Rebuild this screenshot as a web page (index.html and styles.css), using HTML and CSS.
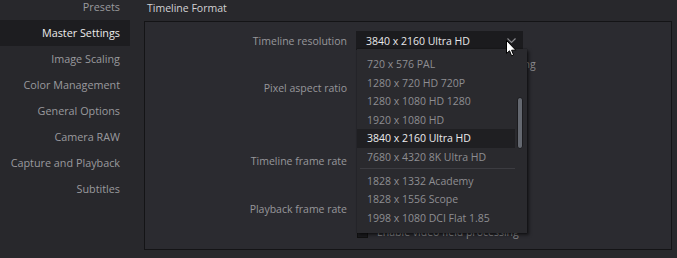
FILE: index.html
```html
<!DOCTYPE html>
<html>
<head>
<meta charset="utf-8">
<link rel="stylesheet" href="styles.css">
</head>
<body>
<div class="app">
  <nav class="sidebar">
    <div class="nav-item">Presets</div>
    <div class="nav-item active">Master Settings</div>
    <div class="nav-item">Image Scaling</div>
    <div class="nav-item">Color Management</div>
    <div class="nav-item">General Options</div>
    <div class="nav-item">Camera RAW</div>
    <div class="nav-item">Capture and Playback</div>
    <div class="nav-item">Subtitles</div>
  </nav>
  <main class="main">
    <div class="section-title">Timeline Format</div>
    <section class="panel">
      <div class="form">
        <div class="label row-res">Timeline resolution</div>
        <div class="control row-res">
          <div class="select">
            <span class="select-value">3840 x 2160 Ultra HD</span>
            <svg class="chevron" width="9" height="6" viewBox="0 0 9 6"><path d="M0.5 0.5 L4.5 4.5 L8.5 0.5" fill="none" stroke="#8a8a8e" stroke-width="1.2"/></svg>
            <svg class="cursor" width="11" height="17" viewBox="0 0 11 17"><path d="M0.5 0.5 L0.5 13.5 L3.5 10.8 L5.6 15.8 L7.6 15 L5.6 10.2 L9.8 10.2 Z" fill="#ffffff" stroke="#000000" stroke-width="1" stroke-linejoin="round"/></svg>
            <div class="menu">
              <div class="menu-list">
                <div class="opt">720 x 576 PAL</div>
                <div class="opt">1280 x 720 HD 720P</div>
                <div class="opt">1280 x 1080 HD 1280</div>
                <div class="opt">1920 x 1080 HD</div>
                <div class="opt selected">3840 x 2160 Ultra HD</div>
                <div class="opt">7680 x 4320 8K Ultra HD</div>
                <div class="sep"></div>
                <div class="opt">1828 x 1332 Academy</div>
                <div class="opt">1828 x 1556 Scope</div>
                <div class="opt">1998 x 1080 DCI Flat 1.85</div>
              </div>
              <div class="scroll-track"><div class="scroll-thumb"></div></div>
            </div>
          </div>
        </div>
        <div class="label row-dim"></div>
        <div class="control row-dim">
          <span class="dim-text">processing</span>
        </div>
        <div class="label row-par">Pixel aspect ratio</div>
        <div class="control row-par"></div>
        <div class="label row-tfr">Timeline frame rate</div>
        <div class="control row-tfr"></div>
        <div class="label row-pfr">Playback frame rate</div>
        <div class="control row-pfr"></div>
        <div class="label row-evf"></div>
        <div class="control row-evf">
          <span class="checkbox"></span>
          <span class="check-label">Enable video field processing</span>
        </div>
      </div>
    </section>
  </main>
</div>
</body>
</html>
```

FILE: styles.css
```css
* { box-sizing: border-box; }
html, body {
  margin: 0;
  padding: 0;
  width: 677px;
  height: 258px;
  overflow: hidden;
  background: #28282c;
  font-family: "Open Sans", "Noto Sans", sans-serif;
  font-size: 10.5px;
}
.app {
  display: flex;
  height: 258px;
}
.sidebar {
  width: 130px;
  flex: none;
  display: flex;
  flex-direction: column;
  margin-top: -6px;
  font-size: 10.8px;
}
.nav-item {
  height: 26px;
  line-height: 26px;
  text-align: right;
  padding-right: 10px;
  color: #9a9a9e;
  white-space: nowrap;
}
.nav-item.active {
  background: #1d1d20;
  color: #ececec;
}
.main {
  flex: 1;
  padding-left: 14px;
  padding-right: 5px;
  display: flex;
  flex-direction: column;
}
.section-title {
  height: 21px;
  line-height: 16px;
  padding-left: 3px;
  color: #d2d2d4;
}
.panel {
  height: 229px;
  border: 1px solid #141416;
  background: #2b2b30;
  position: relative;
}
.form {
  display: grid;
  grid-template-columns: 202px 1fr;
  column-gap: 9px;
  grid-template-rows: 9px 19px 27px 22px 51px 22px 26px 22px 24px;
}
.form > .row-res { grid-row: 2; }
.form > .row-dim { grid-row: 3; }
.form > .row-par { grid-row: 4; }
.form > .row-tfr { grid-row: 6; }
.form > .row-pfr { grid-row: 8; }
.form > .row-evf { grid-row: 9; }
.label {
  text-align: right;
  color: #97979b;
  display: flex;
  align-items: center;
  justify-content: flex-end;
  white-space: nowrap;
}
.control {
  display: flex;
  align-items: center;
  color: #8a8a8e;
}
.select {
  position: relative;
  width: 167px;
  height: 19px;
  background: #1b1b1e;
  display: flex;
  align-items: center;
  padding-left: 10px;
  z-index: 2;
}
.select-value {
  color: #e8e8ea;
  white-space: nowrap;
}
.chevron {
  position: absolute;
  left: 151px;
  top: 7px;
}
.cursor {
  position: absolute;
  left: 150px;
  top: 9px;
  z-index: 5;
}
.menu {
  position: absolute;
  left: 1px;
  top: 18px;
  width: 170px;
  height: 184px;
  background: #2a2a2e;
  box-shadow: 2px 2px 3px rgba(0,0,0,0.55), 0 0 1px rgba(0,0,0,0.6);
  display: flex;
  padding: 6px 0 6px 0;
  z-index: 3;
}
.menu-list {
  width: 158px;
  display: flex;
  flex-direction: column;
}
.opt {
  height: 18.5px;
  line-height: 18.5px;
  padding-left: 10px;
  color: #8e8e92;
  white-space: nowrap;
}
.opt.selected {
  background: #1f1f22;
  color: #ececee;
}
.sep {
  height: 3px;
  margin: 0 0 3px 3px;
  border-bottom: 1px solid #3c3c41;
}
.scroll-track {
  flex: 1;
  position: relative;
}
.scroll-thumb {
  position: absolute;
  left: 2px;
  top: 42px;
  width: 6px;
  height: 52px;
  border-radius: 3px;
  background: #646870;
  border: 1px solid #1c1c1f;
}
.dim-text {
  white-space: nowrap;
  color: #8a8a8e;
  margin-left: 127px;
}
.checkbox {
  width: 11px;
  height: 11px;
  background: #1a1a1d;
  border: 1px solid #111;
  margin-left: 1px;
  margin-right: 9px;
}
.check-label {
  color: #8a8a8e;
  white-space: nowrap;
}
```
